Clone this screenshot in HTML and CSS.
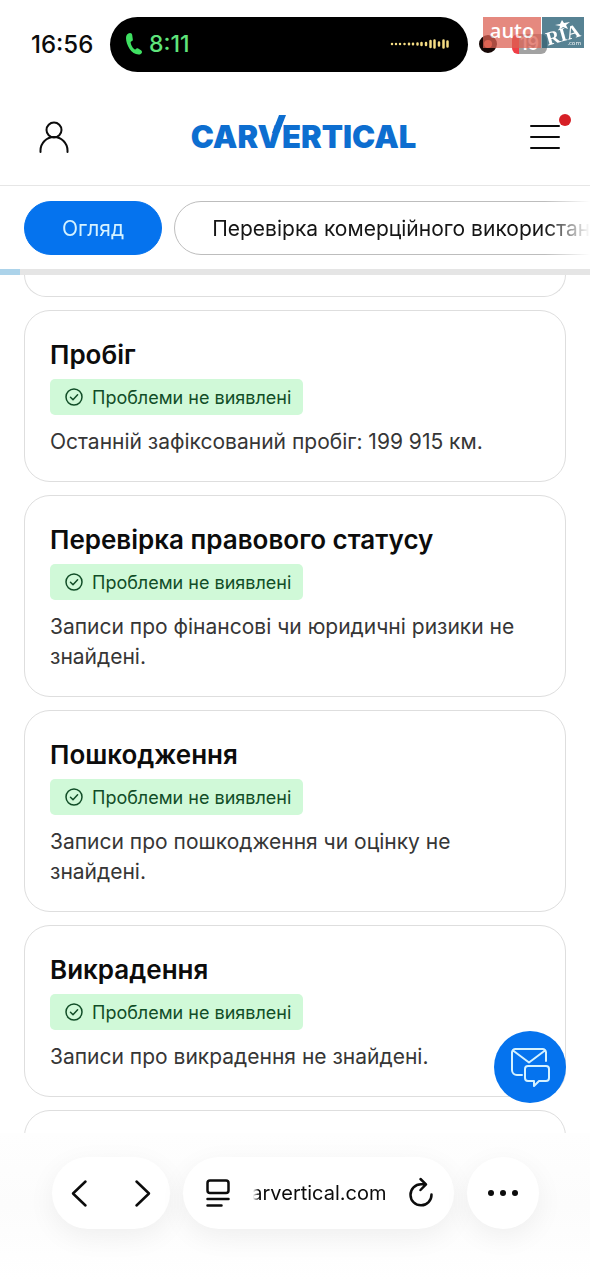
FILE: index.html
```html
<!DOCTYPE html>
<html lang="uk">
<head>
<meta charset="utf-8">
<meta name="viewport" content="width=device-width, initial-scale=1">
<title>carVertical</title>
<link rel="stylesheet" href="styles.css">
</head>
<body>
<div class="screen">
  <div class="status">
    <span class="clock">16:56</span>
    <div class="island">
      <svg class="phone" viewBox="0 0 18 24" aria-hidden="true"><path d="M5 1C2.500 1 1 3.200 1 6c0 7 5.500 16.500 12.500 16.500 2.200 0 3.500-1.300 3.500-2.600 0-.8-.4-1.300-1-1.700l-2.800-1.700c-1-.6-1.700-.3-2.400.5-.6.7-1.100.6-1.700.1C7.300 15.400 6 12.800 5.700 10.700c-.1-.8.200-1.200.9-1.400 1-.4 1.400-1 1.200-2L7.200 3C7 1.800 6.400 1 5 1z"/></svg>
      <span class="call-time">8:11</span>
      <svg class="wave" viewBox="0 0 60 12" aria-hidden="true"><path d="M2 6h.01M6 6h.01M10 6h.01M14.500 6h.01M19 5.800v.4M23 5.800v.4M27.500 5.500v1M31.500 5v2M36 5v2M40.500 3v6M44.500 2.500v7M49 4.500v3M53.500 2.500v7M57.500 3.500v5"/></svg>
    </div>
    <div class="indicators">
      <span class="record"></span>
      <span class="battery">19</span>
      <div class="watermark">
        <span class="wm-auto">auto</span>
        <span class="wm-ria"><svg class="star" viewBox="0 0 16 10" aria-hidden="true"><path d="M7 0l2 3 6-1-4 3 2 4-5-2-4 3 1-4-5-1 5-1z"/></svg><b>RIA</b><small>.com</small></span>
      </div>
    </div>
  </div>

  <header class="header">
    <button class="icon-button" aria-label="Профіль"><svg class="user" viewBox="0 0 30 32" aria-hidden="true"><circle cx="15" cy="9" r="7.500"/><path d="M1.500 31v-1.500a13.500 13.500 0 0 1 27 0V31"/></svg></button>
    <a class="logo" href="#">CAR<span class="logo-v">V<svg class="tick" viewBox="0 0 14 18" aria-hidden="true"><path d="M7 0h7L7 18H0z"/></svg></span>ERTICAL</a>
    <button class="icon-button menu" aria-label="Меню"><svg class="burger" viewBox="0 0 30 26" aria-hidden="true"><path d="M1 2h28M1 13h28M1 24h28"/></svg><span class="dot"></span></button>
  </header>

  <nav class="tabs">
    <button class="tab active">Огляд</button>
    <button class="tab">Перевірка комерційного використання</button>
  </nav>
  <div class="progress"><div class="progress-bar"></div></div>

  <svg class="defs" aria-hidden="true"><symbol id="ok" viewBox="0 0 18 18"><circle cx="9" cy="9" r="8"/><path d="M5.500 9.300l2.500 2.400 4.600-4.900"/></symbol></svg>
  <main class="list">
    <div class="card previous"></div>
    <section class="card">
      <h2>Пробіг</h2>
      <span class="badge"><svg><use href="#ok"/></svg>Проблеми не виявлені</span>
      <p>Останній зафіксований пробіг: 199 915 км.</p>
    </section>
    <section class="card">
      <h2>Перевірка правового статусу</h2>
      <span class="badge"><svg><use href="#ok"/></svg>Проблеми не виявлені</span>
      <p>Записи про фінансові чи юридичні ризики не знайдені.</p>
    </section>
    <section class="card">
      <h2>Пошкодження</h2>
      <span class="badge"><svg><use href="#ok"/></svg>Проблеми не виявлені</span>
      <p>Записи про пошкодження чи оцінку не знайдені.</p>
    </section>
    <section class="card">
      <h2>Викрадення</h2>
      <span class="badge"><svg><use href="#ok"/></svg>Проблеми не виявлені</span>
      <p>Записи про викрадення не знайдені.</p>
    </section>
    <div class="card next"></div>
  </main>

  <footer class="browser">
    <div class="pill nav-pill">
      <button aria-label="Назад"><svg class="chevron" viewBox="0 0 16 27"><path d="M14.500 1.500L2 13.500l12.500 12"/></svg></button>
      <button aria-label="Вперед"><svg class="chevron" viewBox="0 0 16 27"><path d="M1.500 1.500L14 13.500l-12.500 12"/></svg></button>
    </div>
    <div class="pill url-pill">
      <button aria-label="Меню сторінки"><svg class="reader" viewBox="0 0 24 28"><rect x="1.500" y="1.500" width="21" height="12.500" rx="2.500"/><path d="M1.500 20h21M1.500 26.500h14"/></svg></button>
      <span class="url">carvertical.com</span>
      <button aria-label="Оновити"><svg class="reload" viewBox="0 0 24 28"><path d="M15.500 5.300H12A10.500 10.500 0 1 0 22.500 15.500M11.500 0l5.500 5.300-5.500 5.700"/></svg></button>
    </div>
    <div class="pill more-pill">
      <button aria-label="Більше"><svg class="more" viewBox="0 0 30 6"><circle cx="3" cy="3" r="3"/><circle cx="15" cy="3" r="3"/><circle cx="27" cy="3" r="3"/></svg></button>
    </div>
  </footer>
  <button class="chat" aria-label="Написати нам"><svg viewBox="0 0 40 40"><path d="M12 28H7a5 5 0 0 1-5-5V5.500A3.500 3.500 0 0 1 5.500 2h27A3.500 3.500 0 0 1 36 5.500V14M3 3.500l16 12 16-12"/><path d="M18 19h18a3 3 0 0 1 3 3v9a3 3 0 0 1-3 3h-7l-5 5v-5h-6a3 3 0 0 1-3-3v-9a3 3 0 0 1 3-3z"/></svg></button>
</div>
</body>
</html>
```

FILE: styles.css
```css
* { box-sizing: border-box; }
body { margin: 0; background: #fff; color: #0c0c0c; font-family: Inter, "Noto Sans", sans-serif; }
button { border: 0; padding: 0; background: none; color: inherit; font: inherit; }
svg { display: block; flex: none; overflow: visible; fill: none; stroke: currentColor; stroke-linecap: round; stroke-linejoin: round; }
.defs { position: absolute; width: 0; height: 0; }
.screen { position: relative; display: flex; flex-direction: column; height: 100vh; overflow: hidden; }

.status { display: flex; align-items: center; height: 88px; padding: 0 6px 0 31px; }
.clock { width: 79px; font-size: 24px; font-weight: 500; }
.island { display: flex; flex: 1; align-items: center; height: 55px; padding: 0 18px 0 15px; border-radius: 28px; background: #000; color: #5fe47b; }
.phone { width: 18px; height: 24px; margin-right: 6px; fill: #3fe062; stroke: none; }
.call-time { flex: 1; font-size: 23px; font-weight: 500; }
.wave { width: 60px; height: 12px; color: #f5dc83; stroke-width: 2.5; }
.indicators { position: relative; display: flex; align-items: center; width: 116px; height: 55px; padding-left: 11px; }
.record { width: 18px; height: 18px; border: 5px solid #160806; border-radius: 50%; background: #e46a4c; }
.battery { width: 35px; height: 20px; margin-left: 15px; border-radius: 6px; background: linear-gradient(90deg, #ef3e46 7px, #a2a2a2 7px); color: #fff; font-size: 18px; font-weight: 600; line-height: 20px; text-align: center; }
.watermark { position: absolute; top: 0; right: 0; display: flex; gap: 1px; height: 31px; color: #fff; opacity: .75; }
.wm-auto { width: 58px; background: #dc6255; font-family: "Open Sans", sans-serif; font-size: 20px; font-weight: 600; line-height: 28px; text-align: center; }
.wm-ria { position: relative; width: 42px; background: #1f586f; font-family: "Liberation Serif", serif; font-size: 19px; line-height: 36px; text-align: center; }
.wm-ria b { display: block; transform: rotate(-16deg); }
.wm-ria small { position: absolute; right: 3px; bottom: 1px; font: 6px/8px "Open Sans", sans-serif; }
.star { position: absolute; top: 3px; left: 13px; width: 16px; height: 10px; fill: #fff; stroke: none; }

.header { display: flex; align-items: center; justify-content: space-between; height: 98px; padding: 0 30px 0 39px; border-bottom: 1px solid #e6e6e6; }
.icon-button { position: relative; display: grid; place-items: center; width: 30px; height: 44px; }
.user { width: 30px; height: 32px; stroke-width: 2; }
.burger { width: 30px; height: 26px; stroke-width: 2; }
.dot { position: absolute; top: -1px; right: -11px; width: 12px; height: 12px; border-radius: 50%; background: #d61f26; }
.logo { margin-left: 8px; color: #0d6ed0; font-size: 31px; font-weight: 900; line-height: 40px; text-decoration: none; }
.logo-v { position: relative; }
.tick { position: absolute; top: -3px; right: -4px; width: 14px; height: 18px; fill: #0d6ed0; stroke: none; }

.tabs { display: flex; gap: 12px; height: 83px; padding: 15px 0 14px 24px; overflow: hidden; -webkit-mask-image: linear-gradient(90deg, #000 calc(100% - 45px), transparent); mask-image: linear-gradient(90deg, #000 calc(100% - 45px), transparent); }
.tab { flex: none; height: 54px; padding: 0 37px; border: 1px solid #bdbdbd; border-radius: 27px; color: #161616; font-size: 21px; white-space: nowrap; }
.tab.active { border-color: #0573ee; background: #0573ee; color: #d5f2ff; }
.progress { height: 6px; background: #e5e5e5; }
.progress-bar { width: 20px; height: 100%; background: #acd3ea; }

.list { display: flex; flex: 1; flex-direction: column; gap: 13px; min-height: 0; padding: 0 24px; overflow: hidden; }
.card { flex: none; padding: 26px 25px 24px; border: 1px solid #dedede; border-radius: 26px; }
.card.previous { height: 22px; padding: 0; border-top: 0; border-radius: 0 0 24px 24px; }
.card.next { height: 80px; }
.card h2 { margin: 0 0 6px; font-size: 26px; font-weight: 600; line-height: 36px; }
.card p { margin: 12px 0 0; color: #363636; font-size: 21px; line-height: 30px; }
.badge { display: flex; gap: 9px; align-items: center; width: max-content; height: 36px; padding: 0 12px 0 15px; border-radius: 5px; background: #d0f9d8; color: #114d27; font-size: 18px; }
.badge svg { width: 18px; height: 18px; stroke-width: 1.5; }

.browser { display: flex; gap: 13px; align-items: flex-start; height: 147px; padding: 24px 51px 0 52px; background: linear-gradient(#fefefe, #fcfcfc 50%, #fff); }
.pill { display: flex; align-items: center; height: 72px; border-radius: 36px; background: #fff; box-shadow: 0 8px 28px rgba(0, 0, 0, .06); color: #0c0c0c; }
.nav-pill { justify-content: space-between; width: 118px; padding: 0 19px; }
.chevron { width: 16px; height: 27px; stroke-width: 2.5; }
.url-pill { flex: 1; justify-content: space-between; padding: 0 21px 0 23px; }
.reader { width: 24px; height: 28px; stroke-width: 2.5; }
.reload { width: 24px; height: 28px; stroke-width: 2.5; }
.url { display: flex; justify-content: flex-end; width: 134px; overflow: hidden; font-size: 20px; -webkit-mask-image: linear-gradient(90deg, transparent, #000 6px); mask-image: linear-gradient(90deg, transparent, #000 6px); }
.more-pill { justify-content: center; width: 72px; }
.more { width: 30px; height: 6px; fill: currentColor; stroke: none; }
.chat { position: absolute; right: 24px; bottom: 177px; display: grid; place-items: center; width: 72px; height: 72px; border-radius: 50%; background: #0573ee; color: #d5f2ff; }
.chat svg { width: 40px; height: 40px; stroke-width: 2; }
```
